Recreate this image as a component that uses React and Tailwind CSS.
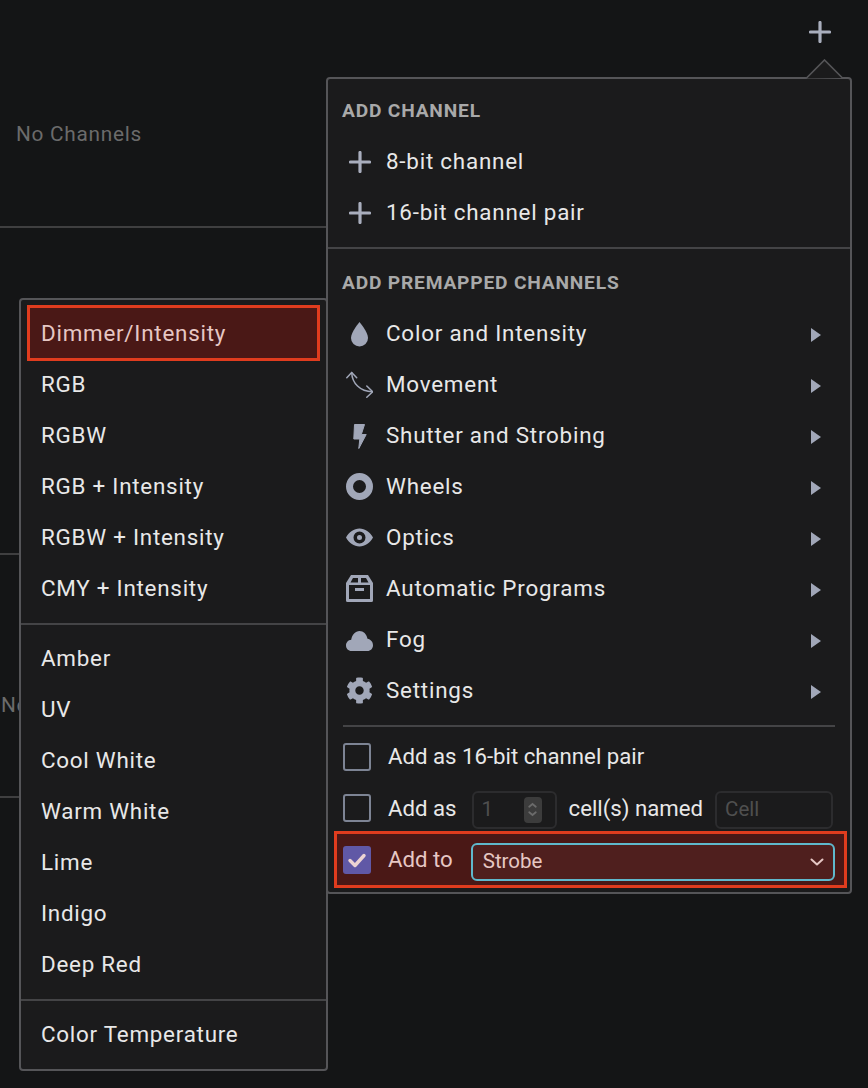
import React from "react";
import { FaCog } from "react-icons/fa";

const font = { fontFamily: "Roboto, sans-serif" };

const Plus = ({ className }) => (
  <svg viewBox="0 0 22 22" className={className}>
    <path d="M11 1.500v19M1.500 11h19" stroke="#a9aebd" strokeWidth="3.200" strokeLinecap="round" fill="none" />
  </svg>
);

const Drop = () => (
  <svg viewBox="0 0 27 27" className="w-[27px] h-[27px]">
    <path fill="#a1a7b8" d="M13.500 2C13.500 2 22 12 22 18A8.500 8.500 0 0 1 5 18C5 12 13.500 2 13.500 2Z" />
  </svg>
);

const Bolt = () => (
  <svg viewBox="0 0 27 27" className="w-[27px] h-[27px]">
    <path fill="#a1a7b8" stroke="#a1a7b8" strokeWidth="1" strokeLinejoin="round" d="M8.500 2.500H18.500L15.300 12.500H20.200L12.800 26.500L13.800 17H7.800Z" />
  </svg>
);

const Arrows = () => (
  <svg viewBox="0 0 27 27" className="w-[27px] h-[27px]" fill="none" stroke="#a1a7b8" strokeWidth="1.500" strokeLinecap="round" strokeLinejoin="round">
    <path d="M5.700 1.500C6 12 14 20.700 26.500 20.700" />
    <path d="M.8 6.700l4.900-5.200 5 5.200M20.800 15l5.900 5.700-5.900 5.600" />
  </svg>
);

const Ring = () => (
  <svg viewBox="0 0 27 27" className="w-[27px] h-[27px]">
    <circle cx="13.500" cy="13.500" r="10" fill="none" stroke="#a1a7b8" strokeWidth="7" />
  </svg>
);

const Eye = () => (
  <svg viewBox="0 0 27 27" className="w-[27px] h-[27px]">
    <path fillRule="evenodd" fill="#a1a7b8" d="M0 13.500C3 8 8 4.500 13.500 4.500S24 8 27 13.500C24 19 19 22.500 13.500 22.500S3 19 0 13.500ZM13.500 7.500a6 6 0 1 0 0 12a6 6 0 0 0 0-12ZM13.500 11a2.500 2.500 0 1 1 0 5a2.500 2.500 0 0 1 0-5Z" />
  </svg>
);

const Box = () => (
  <svg viewBox="0 0 27 27" className="w-[27px] h-[27px]">
    <path fillRule="evenodd" fill="#a1a7b8" d="M5 0H22L27 8V25.500A1.500 1.500 0 0 1 25.500 27H1.500A1.500 1.500 0 0 1 0 25.500V8ZM7 3L4.500 7.500H12V3ZM15 3V7.500H22.500L20 3ZM3 10V24H24V10ZM9 13H18V16H9Z" />
  </svg>
);

const Cloud = () => (
  <svg viewBox="0 0 27 27" className="w-[27px] h-[27px]">
    <path fill="#a1a7b8" d="M5.500 25C2.400 25 0 22.500 0 19.500C0 16.500 2.300 14 5.200 13.800C6 8.500 9.500 5 13.500 5C17.500 5 20.500 8 21.500 12.800C24.700 13.300 27 16 27 19.200C27 22.500 24.500 25 21.500 25Z" />
  </svg>
);

const Check = ({ className, color }) => (
  <svg viewBox="0 0 20 20" className={className} fill="none" stroke={color} strokeWidth="3.400" strokeLinecap="round" strokeLinejoin="round">
    <path d="M3 10.500l5 5L17 5.500" />
  </svg>
);

const Tri = () => (
  <span className="ml-auto mr-[29px] translate-y-[1px] w-0 h-0 border-y-[7px] border-y-transparent border-l-[10px] border-l-[#a1a7b8]" />
);

const IconBox = ({ children }) => (
  <span className="w-[27px] h-[27px] flex items-center justify-center shrink-0 mr-[13px]">{children}</span>
);

const premapped = [
  { label: "Color and Intensity", icon: <Drop /> },
  { label: "Movement", icon: <Arrows /> },
  { label: "Shutter and Strobing", icon: <Bolt /> },
  { label: "Wheels", icon: <Ring /> },
  { label: "Optics", icon: <Eye /> },
  { label: "Automatic Programs", icon: <Box /> },
  { label: "Fog", icon: <Cloud /> },
  { label: "Settings", icon: <FaCog className="w-[27px] h-[27px] text-[#a1a7b8]" /> },
];

const Row = ({ children }) => (
  <div className="h-[51px] flex items-center pl-[18px] text-[22.4px] tracking-[0.78px] text-[#e8e8e8]">{children}</div>
);

const Heading = ({ className, children }) => (
  <div className={`flex items-center pl-[14px] text-[19.2px] tracking-[0.8px] font-bold text-[#a9a9a9] ${className}`}>{children}</div>
);

const Box28 = () => <span className="w-[28px] h-[28px] rounded-[3px] border-2 border-[#7d8494] shrink-0 mr-[17px]" />;

const ListItem = ({ children }) => (
  <div className="h-[51px] flex items-center pl-[20px] text-[22.4px] tracking-[0.75px] text-[#e8e8e8]">{children}</div>
);

const ChannelMenu = () => (
  <div className="absolute left-[326px] top-[77px] w-[526px] h-[817px] bg-[#1b1b1c] border-2 border-[#555558] rounded-[4px]">
    <svg viewBox="0 0 40 20" className="absolute left-[477px] top-[-20px] w-[40px] h-[20px]">
      <path d="M1 19.500L19.500 1L37.500 19L39 19" fill="#1b1b1c" stroke="#555558" strokeWidth="1.600" />
    </svg>
    <div className="pt-[7px]">
      <Heading className="h-[50px]">ADD CHANNEL</Heading>
      <Row>
        <span className="w-[27px] flex justify-center mr-[13px]"><Plus className="w-[22px] h-[22px]" /></span>8-bit channel
      </Row>
      <Row>
        <span className="w-[27px] flex justify-center mr-[13px]"><Plus className="w-[22px] h-[22px]" /></span>16-bit channel pair
      </Row>
    </div>
    <div className="mt-[9px] h-[2px] bg-[#444446]" />
    <Heading className="mt-[9px] h-[50px]">ADD PREMAPPED CHANNELS</Heading>
    {premapped.map((item) => (
      <Row key={item.label}>
        <IconBox>{item.icon}</IconBox>
        {item.label}
        <Tri />
      </Row>
    ))}
    <div className="mt-[9px] mx-[15px] h-[2px] bg-[#444446]" />
    <div className="mt-[4px] h-[51px] flex items-center pl-[15px] text-[22.2px] text-[#e8e8e8]">
      <Box28 />
      Add as 16-bit channel pair
    </div>
    <div className="h-[51px] flex items-center pl-[15px] text-[22.2px] text-[#e8e8e8]">
      <Box28 />
      <span className="mt-[2px]">Add as</span>
      <div className="ml-[15px] mt-[4px] w-[85px] h-[38px] rounded-[6px] border-2 border-[#2c2c2e] flex items-center pl-[8px] text-[#4f4f4f] text-[20.5px]">
        1
        <span className="ml-auto mr-[13px] w-[18px] h-[26px] rounded-[4px] bg-[#3c3c3c] flex flex-col items-center justify-center">
          <svg viewBox="0 0 10 14" className="w-[11px] h-[17px]" fill="none" stroke="#6b6b6b" strokeWidth="1.600" strokeLinecap="round">
            <path d="M2 4.500L5 2l3 2.500M2 9.500L5 12l3-2.500" />
          </svg>
        </span>
      </div>
      <span className="ml-[12px] mt-[2px]">cell(s) named</span>
      <div className="ml-[12px] mt-[4px] w-[118px] h-[38px] rounded-[6px] border-2 border-[#2c2c2e] flex items-center pl-[8px] text-[#4f4f4f] text-[20.5px]">Cell</div>
    </div>
    <div className="ml-[6px] mr-[3px] -mt-[2px] h-[57px] flex items-center pl-[6px] bg-[#4a1816] border-[3px] border-[#e03c1e] text-[22.2px] text-[#e6c7c4]">
      <span className="w-[28px] h-[28px] rounded-[3px] bg-[#6058a6] flex items-center justify-center shrink-0 mr-[17px]">
        <Check className="w-[20px] h-[20px]" color="#ecd3d3" />
      </span>
      <span className="mt-[1px]">Add to</span>
      <div className="ml-[18px] mt-[4px] w-[364px] h-[38px] rounded-[6px] border-2 border-[#5fb8cc] bg-[#4f1f1e] flex items-center pl-[10px] text-[20.5px]">
        Strobe
        <svg viewBox="0 0 14 8" className="ml-auto mr-[9px] w-[14px] h-[8px]" fill="none" stroke="#e6c7c4" strokeWidth="2" strokeLinecap="round" strokeLinejoin="round">
          <path d="M1.500 1.500L7 6.500l5.500-5" />
        </svg>
      </div>
    </div>
  </div>
);

const groups = [
  ["RGB", "RGBW", "RGB + Intensity", "RGBW + Intensity", "CMY + Intensity"],
  ["Amber", "UV", "Cool White", "Warm White", "Lime", "Indigo", "Deep Red"],
  ["Color Temperature"],
];

const PresetMenu = () => (
  <div className="absolute left-[19px] top-[298px] w-[309px] h-[773px] bg-[#1b1b1c] border-2 border-[#555558] rounded-[4px] pt-[8px]">
    <div className="mx-[6px] mb-[-2px] -mt-[3px] h-[56px] flex items-center pl-[11px] pt-[1px] bg-[#4a1816] border-[3px] border-[#e03c1e] text-[22.4px] tracking-[0.75px] text-[#e6c7c4]">
      Dimmer/Intensity
    </div>
    {groups[0].map((name) => <ListItem key={name}>{name}</ListItem>)}
    <div className="mt-[9px] mb-[8px] h-[2px] bg-[#444446]" />
    {groups[1].map((name) => <ListItem key={name}>{name}</ListItem>)}
    <div className="mt-[9px] mb-[8px] h-[2px] bg-[#444446]" />
    {groups[2].map((name) => <ListItem key={name}>{name}</ListItem>)}
  </div>
);

const App = () => {
  return (
    <div className="relative w-[868px] h-[1088px] overflow-hidden bg-[#141516]" style={font}>
      <div className="w-[400px] flex flex-col text-[20.8px] tracking-[0.73px] text-[#6b6b6b]">
        <div className="h-[228px] border-b-2 border-[#3f3f40] pl-[16px] pt-[120px] leading-[28px]">No Channels</div>
        <div className="h-[327px] border-b-2 border-[#3f3f40]" />
        <div className="h-[243px] border-b-2 border-[#3f3f40] pl-[1px] pt-[136px] leading-[28px]">No Channels</div>
      </div>
      <Plus className="absolute left-[809px] top-[21px] w-[22px] h-[22px]" />
      <ChannelMenu />
      <PresetMenu />
    </div>
  );
};

export default App;
